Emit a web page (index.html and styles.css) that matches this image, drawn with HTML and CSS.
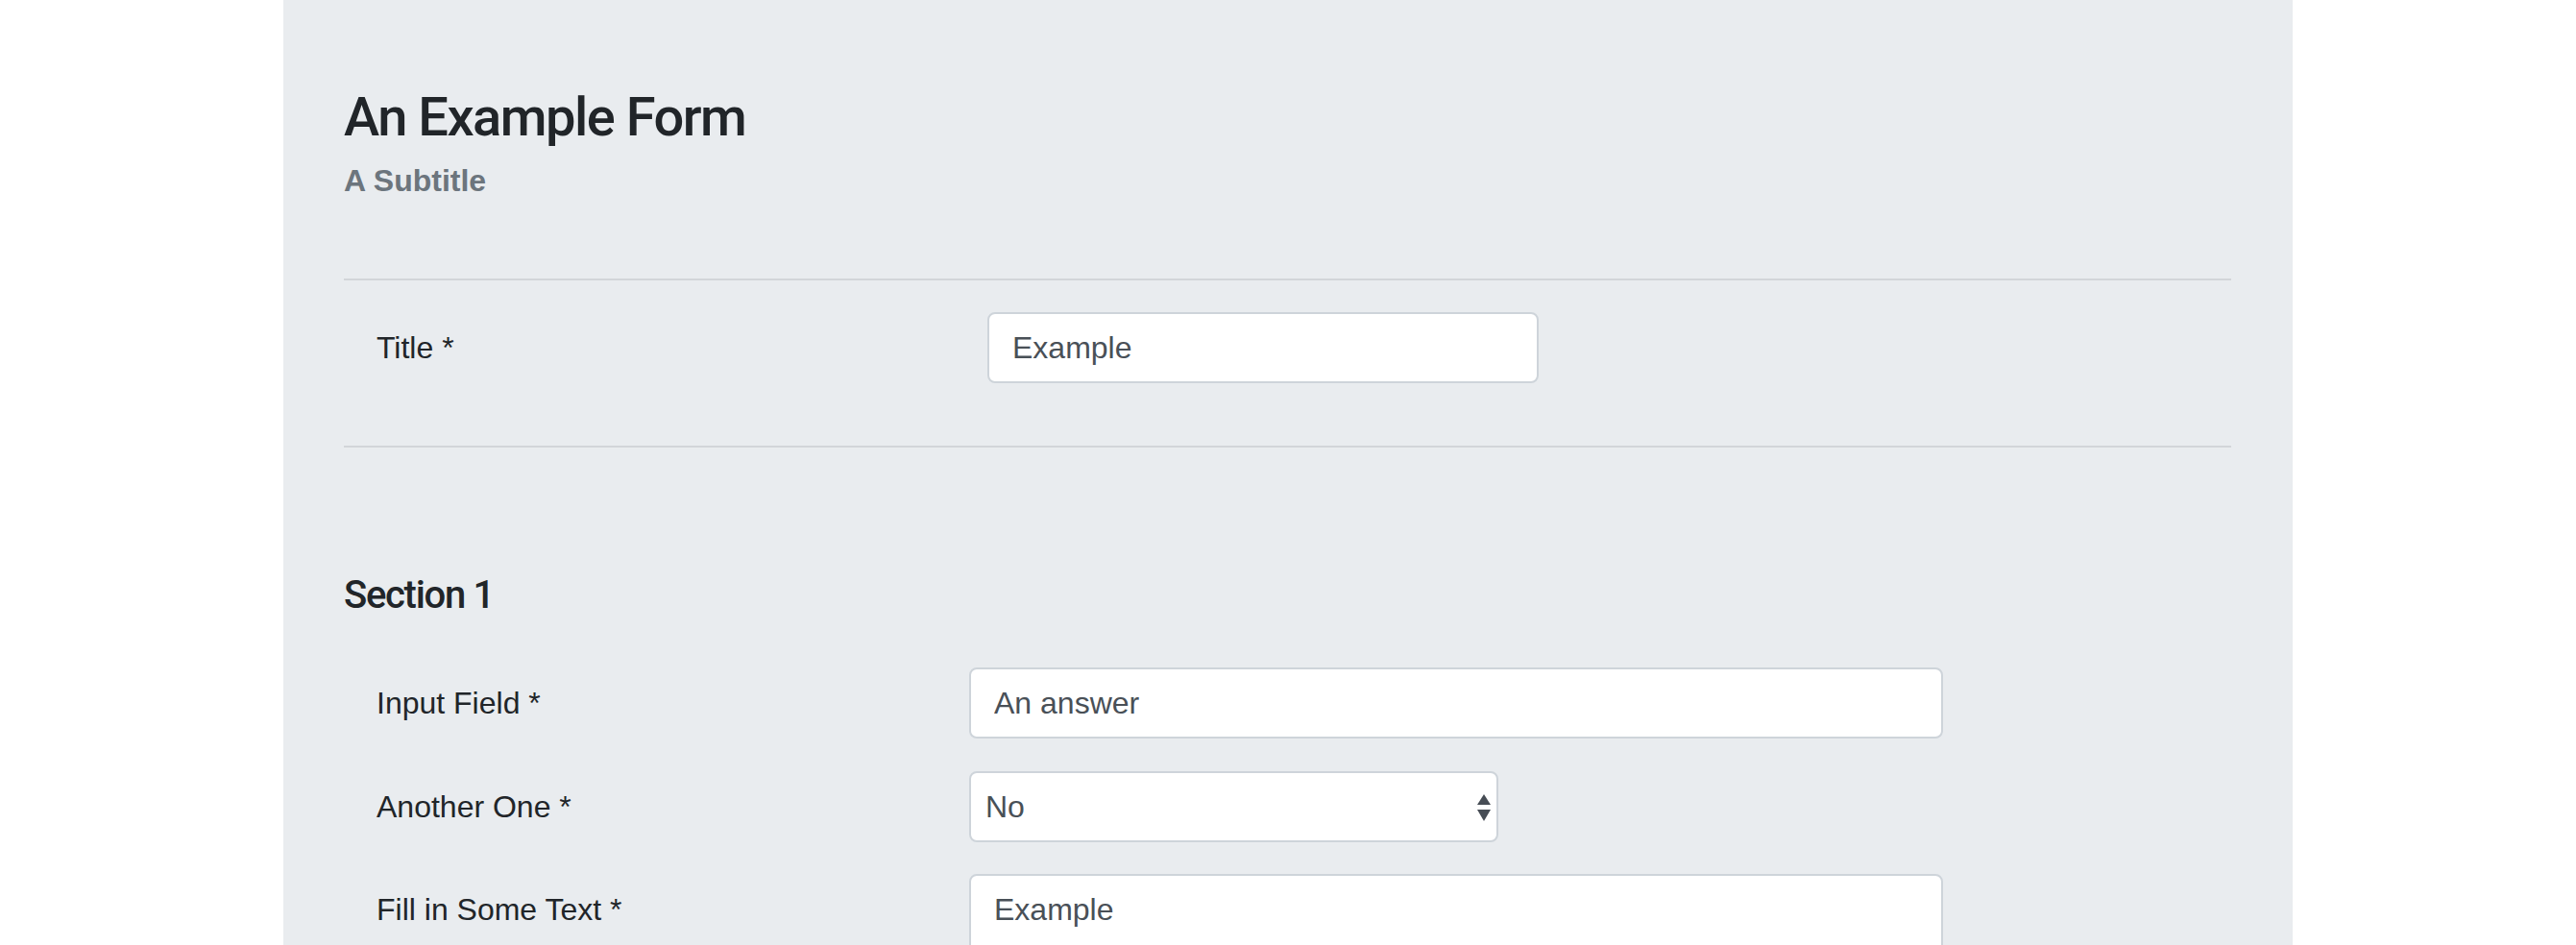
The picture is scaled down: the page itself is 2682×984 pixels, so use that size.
FILE: index.html
```html
<!DOCTYPE html>
<html lang="en">
<head>
<meta charset="utf-8">
<title>An Example Form</title>
<link rel="stylesheet" href="styles.css">
</head>
<body>
<main class="panel">
  <header class="head">
    <h1 class="title">An Example Form</h1>
    <p class="subtitle">A Subtitle</p>
  </header>
  <hr class="rule">
  <div class="row title-row">
    <label class="label" for="f-title">Title *</label>
    <input class="field field-title" id="f-title" type="text" value="Example">
  </div>
  <hr class="rule rule-2">
  <section class="section">
    <h2 class="section-title">Section 1</h2>
    <div class="row sec-row">
      <label class="label" for="f-input">Input Field *</label>
      <input class="field field-wide" id="f-input" type="text" value="An answer">
    </div>
    <div class="row sec-row">
      <label class="label" for="f-another">Another One *</label>
      <div class="select-wrap">
        <select class="field select" id="f-another">
          <option>No</option>
          <option>Yes</option>
        </select>
        <svg class="select-arrows" width="14" height="28" viewBox="0 0 14 28" aria-hidden="true">
          <polygon points="0,11 7,0 14,11" />
          <polygon points="0,16 14,16 7,28" />
        </svg>
      </div>
    </div>
    <div class="row sec-row">
      <label class="label" for="f-text">Fill in Some Text *</label>
      <textarea class="field field-wide area" id="f-text">Example</textarea>
    </div>
  </section>
</main>
</body>
</html>
```

FILE: styles.css
```css
html, body {
  margin: 0;
  padding: 0;
  background: #ffffff;
  overflow: hidden;
}

.panel {
  width: 2092px;
  margin: 0 auto;
  box-sizing: border-box;
  min-height: 100vh;
  background: #e9ecef;
  padding: 89px 64px 64px 63px;
  color: #212529;
  font-family: "Liberation Sans", Arial, sans-serif;
}

.title {
  margin: 0;
  font-family: Roboto, "Liberation Sans", sans-serif;
  font-weight: 500;
  font-size: 56px;
  line-height: 67px;
  letter-spacing: -1.5px;
  color: #212529;
}

.subtitle {
  margin: 8px 0 0;
  font-size: 32px;
  line-height: 48px;
  font-weight: bold;
  color: #6c757d;
}

.rule {
  margin: 78px 0 0;
  border: 0;
  border-top: 2px solid #d2d5d9;
  height: 0;
}

.rule-2 {
  margin-top: 0;
}

.row {
  display: grid;
  align-items: start;
  padding-left: 34px;
}

.title-row {
  grid-template-columns: 636px 574px;
  padding-top: 33px;
  padding-bottom: 65px;
}

.label {
  font-size: 32px;
  line-height: 74px;
  color: #212529;
}

.field {
  box-sizing: border-box;
  height: 74px;
  margin: 0;
  padding: 0 24px;
  border: 2px solid #ced4da;
  border-radius: 8px;
  background: #ffffff;
  font-family: "Liberation Sans", Arial, sans-serif;
  font-size: 32px;
  line-height: 48px;
  color: #495057;
  outline: none;
}

.section-title {
  margin: 130px 0 0;
  font-family: Roboto, "Liberation Sans", sans-serif;
  font-weight: 500;
  font-size: 40px;
  line-height: 48px;
  letter-spacing: -1.3px;
  color: #212529;
}

.sec-row {
  grid-template-columns: 617px 1014px;
  margin-top: 51px;
}

.sec-row + .sec-row {
  margin-top: 33.5px;
}

.field-wide {
  width: 1014px;
}

.select-wrap {
  position: relative;
  width: 551px;
}

.select {
  width: 551px;
  appearance: none;
  -webkit-appearance: none;
  padding-left: 15px;
}

.select-arrows {
  position: absolute;
  right: 8px;
  top: 24px;
  fill: #474d55;
  pointer-events: none;
}

.area {
  height: 150px;
  padding: 11px 24px;
  resize: none;
  display: block;
}
```
